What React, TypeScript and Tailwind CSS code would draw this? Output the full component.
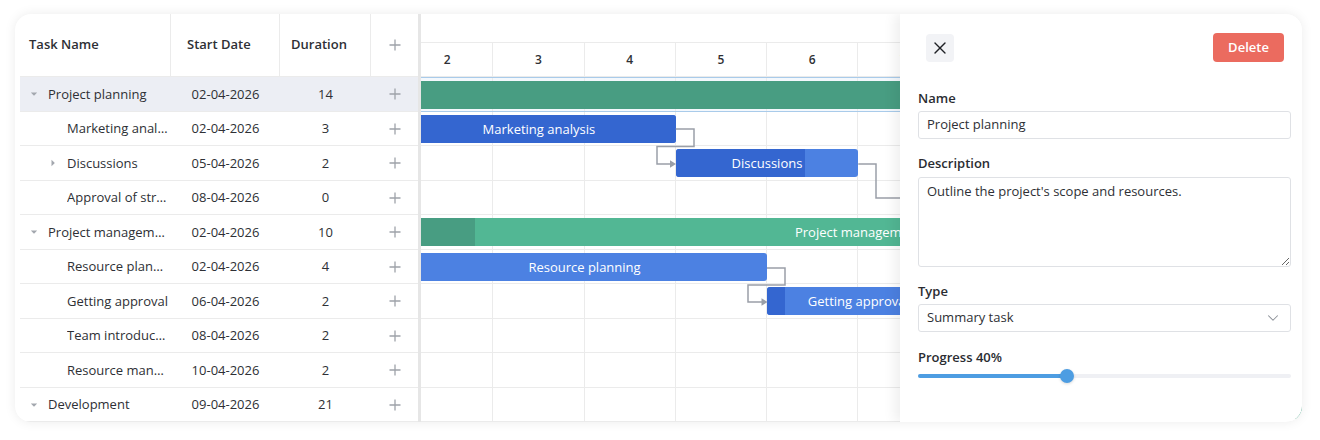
import { ChevronDown, X } from 'lucide-react';

interface Task {
  id: number;
  name: string;
  start: string;
  duration: number;
  level: number;
  toggle?: 'open' | 'closed';
  day: number;
  progress: number;
  type: 'summary' | 'task' | 'milestone';
}

const tasks: Task[] = [
  { id: 1, name: 'Project planning', start: '02-04-2026', duration: 14, level: 0, toggle: 'open', day: 2, progress: 40, type: 'summary' },
  { id: 2, name: 'Marketing analysis', start: '02-04-2026', duration: 3, level: 1, day: 2, progress: 100, type: 'task' },
  { id: 3, name: 'Discussions', start: '05-04-2026', duration: 2, level: 1, toggle: 'closed', day: 5, progress: 71, type: 'task' },
  { id: 4, name: 'Approval of strategy', start: '08-04-2026', duration: 0, level: 1, day: 8, progress: 0, type: 'milestone' },
  { id: 5, name: 'Project management', start: '02-04-2026', duration: 10, level: 0, toggle: 'open', day: 2, progress: 8, type: 'summary' },
  { id: 6, name: 'Resource planning', start: '02-04-2026', duration: 4, level: 1, day: 2, progress: 5, type: 'task' },
  { id: 7, name: 'Getting approval', start: '06-04-2026', duration: 2, level: 1, day: 6, progress: 10, type: 'task' },
  { id: 8, name: 'Team introduction meeting', start: '08-04-2026', duration: 2, level: 1, day: 8, progress: 0, type: 'task' },
  { id: 9, name: 'Resource management', start: '10-04-2026', duration: 2, level: 1, day: 10, progress: 0, type: 'task' },
  { id: 10, name: 'Development', start: '09-04-2026', duration: 21, level: 0, toggle: 'open', day: 9, progress: 20, type: 'summary' },
];

const DAY_W = 91.25;
const days = Array.from({ length: 16 }, (_, i) => i + 2);

function PlusIcon() {
  return (
    <svg width="12" height="12" viewBox="0 0 12 12" className="text-[#9ea2a9]">
      <path d="M6 0.5V11.5M0.5 6H11.5" stroke="currentColor" strokeWidth="1.3" />
    </svg>
  );
}

function Toggle({ state }: { state?: 'open' | 'closed' }) {
  if (!state) return null;
  return (
    <svg width="8" height="8" viewBox="0 0 8 8" className="text-[#a3a7ae]">
      {state === 'open' ? (
        <polygon points="0.8,2.5 7.2,2.5 4,5.8" fill="currentColor" />
      ) : (
        <polygon points="2.5,0.8 2.5,7.2 5.8,4" fill="currentColor" />
      )}
    </svg>
  );
}

function GridPanel() {
  return (
    <div className="ml-[5px] w-[398px] shrink-0 text-[13px] text-[#2e3035]">
      {/* Header */}
      <div className="flex h-[63px] border-b border-[#ebebeb] font-semibold">
        <div className="flex w-[151px] items-center border-r border-[#ebebeb] pl-[9px]">Task Name</div>
        <div className="flex w-[109px] items-center border-r border-[#ebebeb] pl-[16px]">Start Date</div>
        <div className="flex w-[91px] items-center border-r border-[#ebebeb] pl-[11px]">Duration</div>
        <div className="flex w-[47px] items-center justify-center">
          <PlusIcon />
        </div>
      </div>

      {/* Rows */}
      {tasks.map((t) => (
        <div
          key={t.id}
          className={`flex h-[34.5px] items-center border-b border-[#ebebeb] pt-[1px] ${t.id === 1 ? 'bg-[#eceef4]' : ''}`}
        >
          <div className="flex w-[151px] min-w-0 items-center pl-[8px] pr-[2px]">
            {t.level === 1 && <span className="w-[19px] shrink-0" />}
            <span className="flex w-[12px] shrink-0 items-center justify-center">
              <Toggle state={t.toggle} />
            </span>
            <span className="ml-[8px] truncate">{t.name}</span>
          </div>
          <div className="w-[109px] text-center">{t.start}</div>
          <div className="w-[91px] text-center">{t.duration}</div>
          <div className="flex w-[47px] justify-center">
            <PlusIcon />
          </div>
        </div>
      ))}
    </div>
  );
}

function Bar({ t }: { t: Task }) {
  const left = (t.day - 2) * DAY_W;
  if (t.type === 'milestone') {
    return (
      <div
        className="absolute top-[7px] h-[20px] w-[20px] rotate-45 rounded-[2px] bg-[#ad44ab]"
        style={{ left: left - 10 }}
      />
    );
  }
  const summary = t.type === 'summary';
  return (
    <div
      className={`absolute top-[3px] h-[28px] overflow-hidden rounded-[3px] ${summary ? 'bg-[#52b794]' : 'bg-[#4c81e2]'}`}
      style={{ left, width: t.duration * DAY_W }}
    >
      <div
        className={`absolute inset-y-0 left-0 ${summary ? 'bg-[#489d82]' : 'bg-[#3466d0]'}`}
        style={{ width: `${t.progress}%` }}
      />
      <div className="relative whitespace-nowrap text-center text-[13px] leading-[28px] text-white">{t.name}</div>
    </div>
  );
}

function Chart() {
  return (
    <div className="relative min-w-0 flex-1 overflow-hidden">
      <div className="h-[29px] border-b border-[#ebebeb]" />
      <div className="ml-[-19px] flex h-[34px] border-b border-[#ebebeb]">
        {days.map((d) => (
          <div
            key={d}
            className="flex w-[91.25px] shrink-0 items-center justify-center border-r border-[#ebebeb] text-[12px] font-semibold text-[#2e3035]"
          >
            {d}
          </div>
        ))}
      </div>

      <div className="relative ml-[-19px] w-[1460px]">
        {tasks.map((t) => (
          <div
            key={t.id}
            className={`relative h-[34.5px] border-b ${t.id === 1 ? 'border-t border-[#a9cbea] bg-[#f3f8fd]' : 'border-[#ebebeb]'}`}
          >
            <div className="flex h-full">
              {days.map((d) => (
                <div key={d} className="h-full w-[91.25px] shrink-0 border-r border-[#ebebeb]" />
              ))}
            </div>
            <Bar t={t} />
          </div>
        ))}

        {/* Links */}
        <svg className="pointer-events-none absolute left-0 top-0" width="1460" height="345">
          <g fill="none" stroke="#9a9fa8" strokeWidth="1.5">
            <path d="M273.75 52 H292 V69.5 H255 V87 H269" />
            <path d="M456.25 87 H474 V121 H536" />
            <path d="M365 191 H383 V208 H346 V225 H360.5" />
          </g>
          <g fill="#9a9fa8">
            <polygon points="268,83.2 274,87 268,90.8" />
            <polygon points="359.5,221.2 365.5,225 359.5,228.8" />
          </g>
        </svg>
      </div>
    </div>
  );
}

function Label({ children }: { children: React.ReactNode }) {
  return <div className="text-[13px] font-semibold leading-[20px] text-[#2a2c31]">{children}</div>;
}

function EditorPanel() {
  return (
    <div className="absolute right-0 top-0 flex h-full w-[402px] flex-col bg-white pl-[18px] pr-[11px] pt-[19px] shadow-[-5px_0_12px_rgba(0,0,0,0.07)]">
      <div className="flex items-center justify-between pl-[8px] pr-[7px]">
        <button className="flex h-[28px] w-[28px] items-center justify-center rounded-[4px] bg-[#f2f3f6] text-[#1f2125]">
          <X size={20} strokeWidth={1.6} />
        </button>
        <button className="h-[29px] w-[71px] rounded-[4px] bg-[#eb6b5f] text-[13px] font-semibold text-white">
          Delete
        </button>
      </div>

      <div className="mt-[26px]">
        <Label>Name</Label>
      </div>
      <div className="mt-[3px] flex h-[28px] items-center rounded-[3px] border border-[#dfe1e5] px-[8px] text-[13px] text-[#2e3035]">
        Project planning
      </div>

      <div className="mt-[14px]">
        <Label>Description</Label>
      </div>
      <textarea
        readOnly
        value="Outline the project's scope and resources."
        className="mt-[4px] h-[90px] w-full rounded-[3px] border border-[#dfe1e5] px-[8px] pt-[3px] text-[13px] leading-[20px] text-[#2e3035] outline-none"
      />

      <div className="mt-[14px]">
        <Label>Type</Label>
      </div>
      <div className="mt-[3px] flex h-[28px] items-center justify-between rounded-[3px] border border-[#dfe1e5] pl-[8px] pr-[8px] text-[13px] text-[#2e3035]">
        <span>Summary task</span>
        <ChevronDown size={18} strokeWidth={1.4} className="text-[#8c9098]" />
      </div>

      <div className="mt-[15px]">
        <Label>Progress 40%</Label>
      </div>
      <div className="relative mt-[2px] flex h-[14px] items-center">
        <div className="h-[4px] w-full rounded-full bg-[#eff0f4]" />
        <div className="absolute left-0 h-[4px] w-[40%] rounded-full bg-[#4d9de2]" />
        <div className="absolute left-[40%] h-[14px] w-[14px] -translate-x-1/2 rounded-full bg-[#4d9de2] shadow-[0_1px_3px_rgba(0,0,0,0.15)]" />
      </div>
    </div>
  );
}

export default function App() {
  return (
    <div className="h-[440px] w-[1320px] bg-white pl-[15px] pt-[14px] font-['Open_Sans',sans-serif]">
      <div className="relative flex h-[408px] w-[1287px] overflow-hidden rounded-[16px] bg-white shadow-[0_0_12px_rgba(0,0,0,0.08)]">
        <GridPanel />
        <div className="w-[3px] shrink-0 bg-[#e6e6e6]" />
        <Chart />
        <EditorPanel />
      </div>
    </div>
  );
}
